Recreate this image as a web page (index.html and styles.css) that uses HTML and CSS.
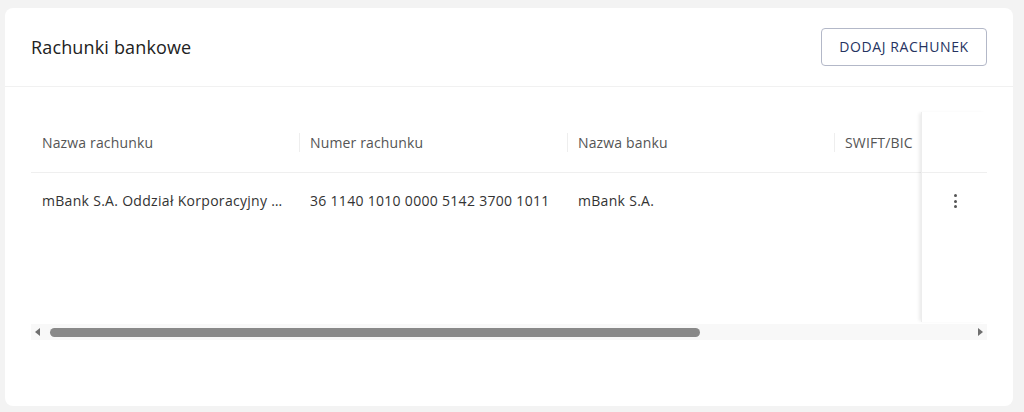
FILE: index.html
```html
<!DOCTYPE html>
<html lang="pl">
<head>
<meta charset="utf-8">
<title>Rachunki bankowe</title>
<link rel="stylesheet" href="styles.css">
</head>
<body>
<main class="page">
  <section class="card">
    <header class="card-header">
      <h1 class="card-title">Rachunki bankowe</h1>
      <button class="btn-outline" type="button">DODAJ RACHUNEK</button>
    </header>
    <div class="card-body">
      <div class="table-frame">
        <div class="table-viewport">
          <div class="table">
            <div class="row head-row">
              <div class="cell c1">Nazwa rachunku</div>
              <div class="cell c2 sep">Numer rachunku</div>
              <div class="cell c3 sep">Nazwa banku</div>
              <div class="cell c4 sep">SWIFT/BIC</div>
              <div class="cell c5 sep"></div>
            </div>
            <div class="row body-row">
              <div class="cell c1"><span class="trunc">mBank S.A. Oddział Korporacyjny Warszawa</span></div>
              <div class="cell c2">36 1140 1010 0000 5142 3700 1011</div>
              <div class="cell c3">mBank S.A.</div>
              <div class="cell c4"></div>
              <div class="cell c5"></div>
            </div>
          </div>
        </div>
        <div class="actions-col">
          <div class="act-head"></div>
          <div class="act-cell">
            <span class="kebab"><i></i><i></i><i></i></span>
          </div>
        </div>
      </div>
      <div class="hscroll">
        <span class="arrow arrow-left"></span>
        <div class="track"><div class="thumb"></div></div>
        <span class="arrow arrow-right"></span>
      </div>
    </div>
  </section>
</main>
</body>
</html>
```
FILE: styles.css
```css
* { box-sizing: border-box; }
html, body { margin: 0; padding: 0; }
body {
  background: #f3f3f3;
  font-family: "Open Sans", "Noto Sans", sans-serif;
  color: #333;
}
.page {
  padding: 8px 11px 6px 5px;
  height: 412px;
}
.card {
  background: #fff;
  border-radius: 8px;
  height: 398px;
  display: flex;
  flex-direction: column;
}
.card-header {
  height: 79px;
  border-bottom: 1px solid #f1f1f1;
  display: flex;
  align-items: center;
  justify-content: space-between;
  padding: 0 26px 0 26px;
}
.card-title {
  margin: 0;
  font-size: 18px;
  font-weight: 400;
  color: #222;
  letter-spacing: 0.15px;
}
.btn-outline {
  height: 38px;
  width: 166px;
  background: #fff;
  border: 1px solid #b3b8c8;
  border-radius: 4px;
  color: #26335f;
  font-family: inherit;
  font-size: 14px;
  font-weight: 500;
  letter-spacing: 0.6px;
  padding: 0;
  margin-top: -1px;
}
.card-body {
  padding: 25px 26px 0 26px;
}
.table-frame {
  display: flex;
  height: 210px;
}
.table-viewport {
  flex: 1;
  overflow: hidden;
}
.table {
  width: 1290px;
}
.row {
  display: flex;
}
.head-row {
  height: 61px;
  align-items: center;
  color: #555;
  font-size: 14px;
  letter-spacing: 0.15px;
  border-bottom: 1px solid #efefef;
}
.body-row {
  height: 55px;
  align-items: center;
  font-size: 14px;
  letter-spacing: 0.3px;
  color: #333;
}
.cell {
  padding: 0 11px;
  white-space: nowrap;
  position: relative;
  overflow: hidden;
}
.c1 { width: 268px; }
.c2 { width: 268px; }
.c3 { width: 267px; }
.c4 { width: 240px; }
.c5 { width: 247px; }
.sep::before {
  content: "";
  position: absolute;
  left: 0;
  top: -12px;
  bottom: -12px;
  width: 1px;
  background: #eeeeee;
}
.trunc {
  display: block;
  overflow: hidden;
  text-overflow: ellipsis;
  white-space: nowrap;
}
.actions-col {
  width: 66px;
  flex: none;
  box-shadow: -3px 0 3px -1px rgba(0,0,0,0.08);
  border-left: 1px solid #ededed;
  background: #fff;
}
.act-head {
  height: 61px;
  border-bottom: 1px solid #efefef;
}
.act-cell {
  height: 55px;
  display: flex;
  align-items: center;
  justify-content: center;
}
.kebab {
  display: flex;
  flex-direction: column;
  gap: 2.5px;
  margin-left: 2px;
  margin-top: 1px;
}
.kebab i {
  display: block;
  width: 3px;
  height: 3px;
  border-radius: 50%;
  background: #555;
}
.hscroll {
  margin-top: 2px;
  height: 16px;
  display: flex;
  align-items: center;
  background: #f8f8f8;
}
.arrow {
  width: 19px;
  flex: none;
  height: 16px;
  display: flex;
  align-items: center;
  justify-content: center;
}
.arrow::after {
  content: "";
  width: 0;
  height: 0;
  border-top: 4px solid transparent;
  border-bottom: 4px solid transparent;
}
.arrow-left::after { border-right: 5px solid #6f6f6f; margin-right: 6px; }
.arrow-right::after { border-left: 5px solid #6f6f6f; margin-left: 6px; }
.track {
  flex: 1;
  height: 16px;
  display: flex;
  align-items: center;
}
.thumb {
  width: 650px;
  height: 9px;
  border-radius: 5px;
  background: #898989;
}
```
